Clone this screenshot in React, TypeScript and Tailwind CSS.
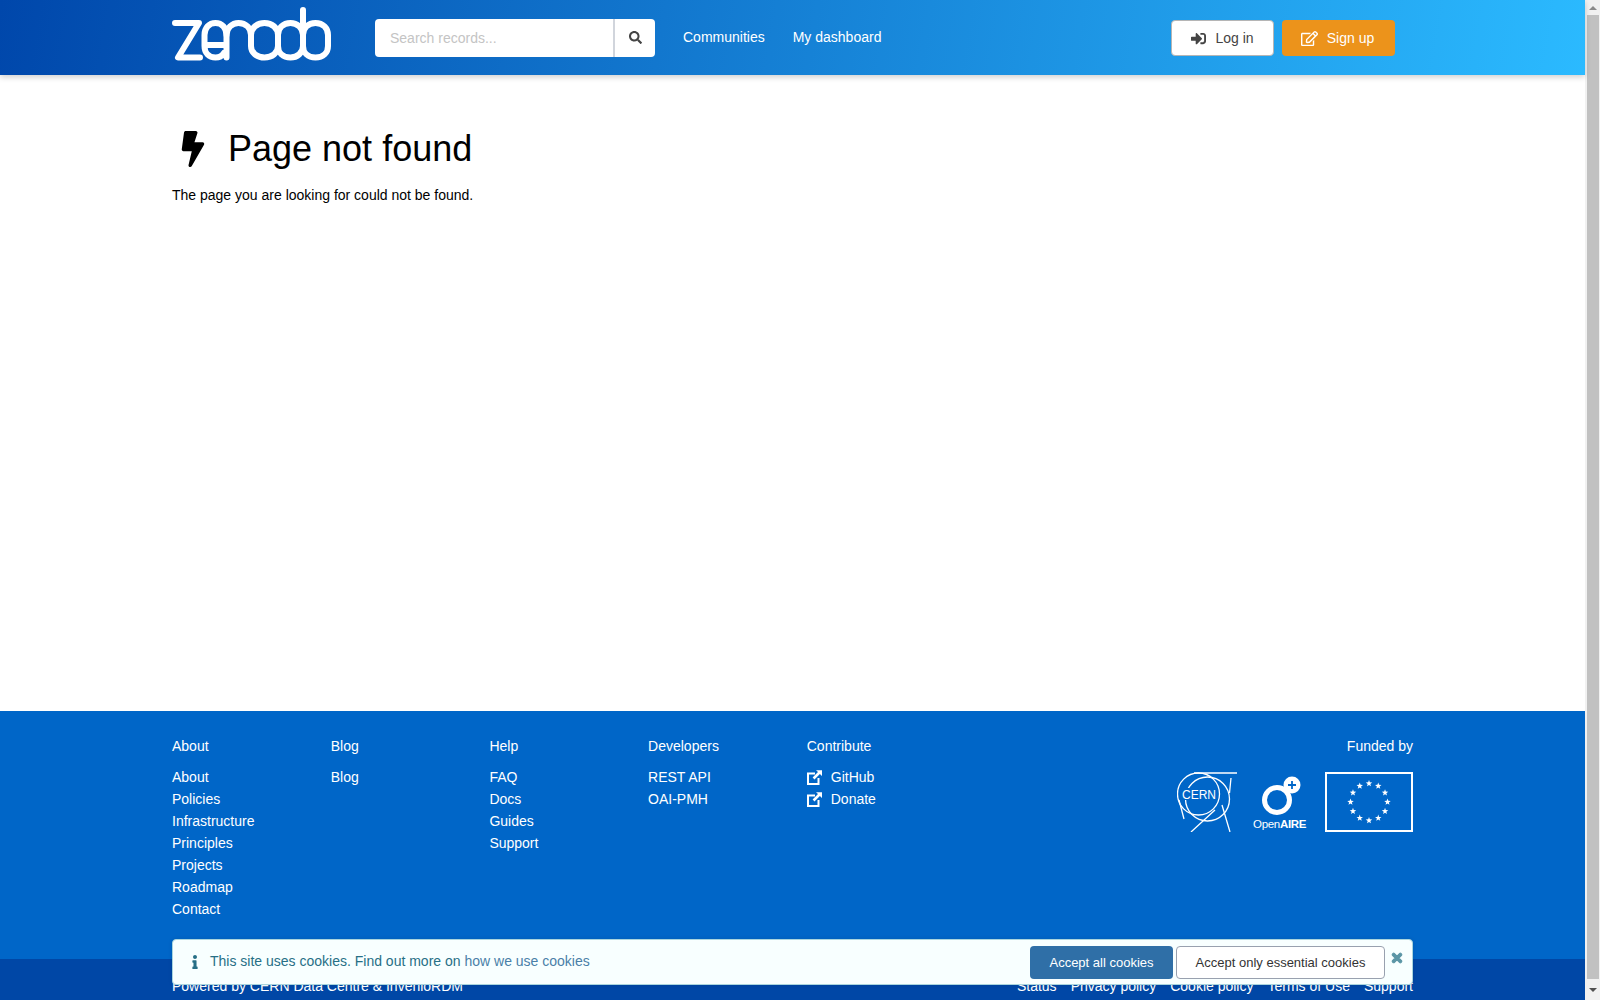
import { FaBolt, FaInfo, FaRegEdit, FaSearch, FaSignInAlt, FaTimes } from 'react-icons/fa'

const columns = [
  { title: 'About', links: ['About', 'Policies', 'Infrastructure', 'Principles', 'Projects', 'Roadmap', 'Contact'] },
  { title: 'Blog', links: ['Blog'] },
  { title: 'Help', links: ['FAQ', 'Docs', 'Guides', 'Support'] },
  { title: 'Developers', links: ['REST API', 'OAI-PMH'] },
  { title: 'Contribute', links: ['GitHub', 'Donate'], external: true }
]

function ZenodoLogo() {
  return (
    <svg viewBox="0 0 160 54" className="mb-[7px] h-[54px] w-[160px] shrink-0" fill="none" stroke="#fff" strokeWidth="6" strokeLinecap="round" strokeLinejoin="round" aria-label="zenodo">
      <path d="M3 16 H27 L6 50.5 H28" />
      <path d="M32.5 38 H54.5 M32.5 28 C32.5 21 37 16 43.5 16 C50 16 54.5 21 54.5 28 V50.5 M32.5 28 V39 C32.5 46 37 50.5 43.5 50.5 C47 50.5 50 49 52 46" />
      <path d="M54.5 28 C54.5 21 60 16 66.5 16 C74 16 79 21 79 28 V39 C79 46 85 50.5 92.5 50.5 C100 50.5 106 46 106 39 V28 C106 21 100 16 92.5 16 C85 16 79 21 79 28" />
      <path d="M106 39 C106 46 111 50.5 118.5 50.5 C125 50.5 131 46 131 39 V28 C131 21 125 16 118.5 16 C111 16 106 21 106 28 M131 3 V39" />
      <path d="M131 28 C131 21 136 16 143.5 16 C151 16 156 21 156 28 V39 C156 46 151 50.5 143.5 50.5 C136 50.5 131 46 131 39 Z" />
    </svg>
  )
}

function CernLogo() {
  return (
    <svg viewBox="0 0 60 60" className="h-[60px] w-[60px] shrink-0" fill="none" stroke="#fff" strokeWidth="1.3">
      <circle cx="30.5" cy="27" r="22" />
      <path d="M17 1 H60 M54 6 L52.5 21 M45 33 L53 60 M38 38 L14 60 M2 28 L7 47" />
      <rect x="4" y="16" width="34" height="12" fill="#0066c8" stroke="none" />
      <circle cx="21.5" cy="22" r="21" />
      <text x="5" y="27" fill="#fff" stroke="none" fontSize="12" fontFamily="'Liberation Sans', sans-serif">CERN</text>
    </svg>
  )
}

function OpenAireLogo() {
  return (
    <svg viewBox="0 0 54 54" className="mt-[4px] h-[54px] w-[54px] shrink-0" fill="none">
      <circle cx="24" cy="24" r="12.5" stroke="#fff" strokeWidth="5" />
      <circle cx="39" cy="9" r="8.5" fill="#fff" />
      <path d="M35 9 H43 M39 5 V13" stroke="#0066c8" strokeWidth="1.8" />
      <text x="0" y="52" fill="#fff" fontSize="11.5" letterSpacing="-0.3" fontFamily="'Liberation Sans', sans-serif">
        Open<tspan fontWeight="700">AIRE</tspan>
      </text>
    </svg>
  )
}

function EuFlag() {
  const stars = Array.from({ length: 12 }, (_, i) => i * 30)
  return (
    <div className="ml-[2px] flex h-[60px] w-[88px] shrink-0 items-center justify-center border-2 border-white">
      <svg viewBox="-24 -24 48 48" className="h-[48px] w-[48px]" fill="#fff">
        {stars.map(a => (
          <polygon
            key={a}
            transform={`rotate(${a}) translate(0 -18.5) rotate(${-a})`}
            points="0,-3.4 0.82,-1.13 3.23,-1.05 1.33,0.43 2,2.75 0,1.4 -2,2.75 -1.33,0.43 -3.23,-1.05 -0.82,-1.13"
          />
        ))}
      </svg>
    </div>
  )
}

function ExternalIcon() {
  return (
    <svg viewBox="0 0 15 15" className="h-[15px] w-[15px] shrink-0" fill="none">
      <path d="M8 3.5 H1 V14 H11.5 V8" stroke="#fff" strokeWidth="2" />
      <path d="M9 0.2 H15 V6 L12.9 4 L7.5 9.4 L5.6 7.5 L11 2.1 Z" fill="#fff" />
    </svg>
  )
}

function Scrollbar() {
  return (
    <div className="flex h-full w-[15px] shrink-0 flex-col items-center bg-[#f1f1f1]">
      <div className="flex h-[15px] items-center justify-center">
        <div className="h-0 w-0 border-x-[4px] border-b-[4px] border-x-transparent border-b-[#8a8a8a]" />
      </div>
      <div className="h-[964px] w-[12px] bg-[#c1c1c1]" />
      <div className="flex h-[21px] items-center justify-center">
        <div className="h-0 w-0 border-x-[4px] border-t-[4px] border-x-transparent border-t-[#505050]" />
      </div>
    </div>
  )
}

export default function App() {
  return (
    <div className="flex h-screen overflow-hidden font-['Liberation_Sans',Arial,sans-serif] text-[14px] text-black">
      <div className="relative min-w-0 flex-1">
        <header className="h-[75px] bg-[linear-gradient(100deg,#0047ab,#2bbaff)] shadow-[0_2px_6px_rgba(0,0,0,0.2)]">
          <div className="mx-auto flex h-full w-[1241px] items-center">
            <ZenodoLogo />
            <div className="ml-[43px] flex h-[38px] w-[280px] overflow-hidden rounded-[4px] bg-white">
              <input
                placeholder="Search records..."
                className="w-[240px] border-r-2 border-gray-300 px-[15px] pt-[1px] text-[14px] outline-none placeholder:text-[#c4c4c4]"
              />
              <div className="flex flex-1 items-center justify-center text-[#444]">
                <FaSearch size={13} />
              </div>
            </div>
            <nav className="ml-[28px] flex gap-[28px] text-white">
              <span>Communities</span>
              <span>My dashboard</span>
            </nav>
            <div className="mr-[18px] ml-auto flex gap-[8px]">
              <button className="flex h-[36px] w-[103px] items-center justify-center gap-[9px] rounded-[4px] border border-[#b5b5b5] bg-white pt-[1px] text-[#444]">
                <FaSignInAlt size={15} />
                Log in
              </button>
              <button className="flex h-[36px] w-[113px] items-center justify-center gap-[9px] rounded-[4px] bg-[#ec931b] pt-[1px] pr-[2px] text-white">
                <FaRegEdit size={17} />
                Sign up
              </button>
            </div>
          </div>
        </header>

        <main className="mx-auto h-[636px] w-[1241px] pt-[51px]">
          <h1 className="flex items-center text-[36px] leading-[46px] font-normal">
            <FaBolt size={36} className="mb-[1px] ml-[8px] w-[26px]" />
            <span className="ml-[22px]">Page not found</span>
          </h1>
          <p className="mt-[13px] leading-[20px]">The page you are looking for could not be found.</p>
        </main>

        <footer className="text-white">
          <div className="h-[248px] bg-[#0066c8]">
            <div className="mx-auto grid w-[1241px] grid-cols-[repeat(5,158.7px)_1fr] pt-[25px]">
              {columns.map(col => (
                <div key={col.title}>
                  <div className="mb-[10px] leading-[20px]">{col.title}</div>
                  {col.links.map(link => (
                    <div key={link} className="flex h-[22px] items-center gap-[9px]">
                      {col.external && <ExternalIcon />}
                      {link}
                    </div>
                  ))}
                </div>
              ))}
              <div>
                <div className="mb-[16px] text-right leading-[20px]">Funded by</div>
                <div className="flex justify-end gap-[16px]">
                  <CernLogo />
                  <OpenAireLogo />
                  <EuFlag />
                </div>
              </div>
            </div>
          </div>
          <div className="h-[47px] bg-[#0047a6]">
            <div className="mx-auto flex w-[1241px] justify-between pt-[17px]">
              <span>Powered by CERN Data Centre &amp; InvenioRDM</span>
              <div className="flex gap-[14px]">
                <span>Status</span>
                <span>Privacy policy</span>
                <span>Cookie policy</span>
                <span>Terms of Use</span>
                <span>Support</span>
              </div>
            </div>
          </div>
        </footer>

        <div className="absolute inset-x-0 bottom-[15px]">
          <div className="mx-auto flex h-[46px] w-[1241px] items-center rounded-[4px] border border-[#a9d5de] bg-[#f8ffff] pr-[8px] pl-[15px] text-[#276f86] shadow-[0_0_4px_rgba(0,0,0,0.1)]">
            <FaInfo size={14} />
            <span className="mb-[2px] ml-[8px]">
              This site uses cookies. Find out more on <a className="text-[#4a7fa8]">how we use cookies</a>
            </span>
            <button className="ml-auto h-[33px] w-[143px] rounded-[4px] bg-[#2f6fa7] pt-[1px] text-[13px] text-white">Accept all cookies</button>
            <button className="ml-[3px] h-[33px] w-[209px] rounded-[4px] border border-gray-400 bg-white pt-[1px] text-[13px] text-[#333]">Accept only essential cookies</button>
            <FaTimes size={14} stroke="currentColor" strokeWidth={40} className="mb-[8px] ml-[5px] text-[#5c96a6]" />
          </div>
        </div>
      </div>
      <Scrollbar />
    </div>
  )
}
